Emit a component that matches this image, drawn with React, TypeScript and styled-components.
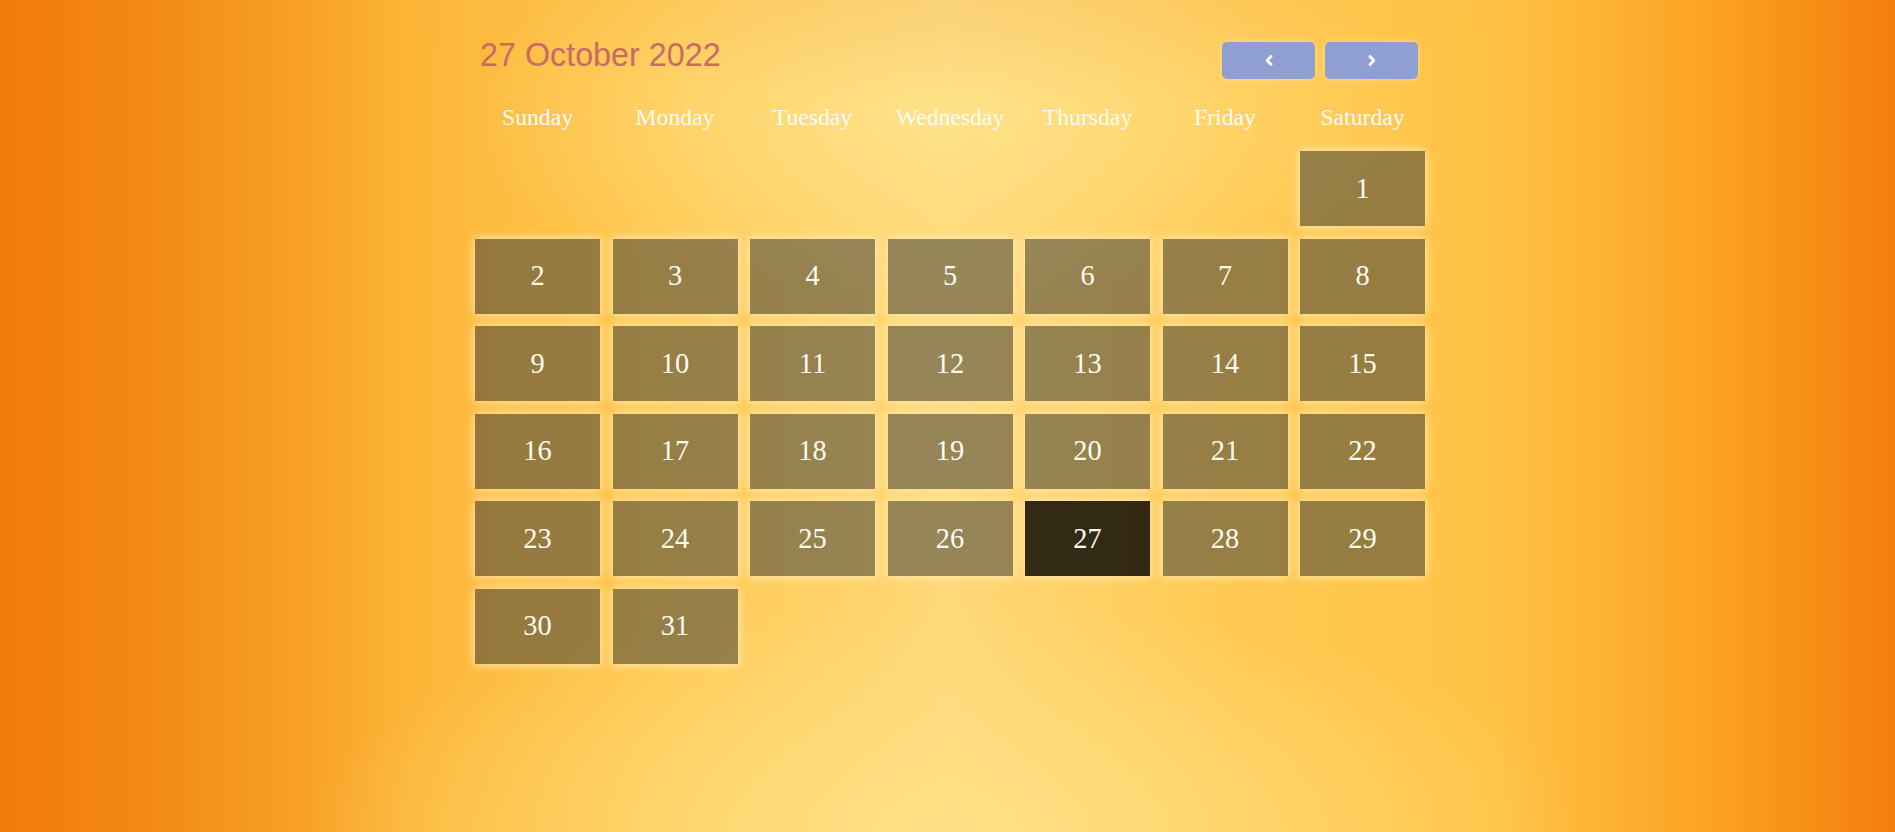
import React from "react";
import styled, { createGlobalStyle } from "styled-components";

const GlobalStyle = createGlobalStyle`
  html, body {
    margin: 0;
    padding: 0;
    height: 100%;
  }
  body {
    font-family: "Liberation Serif", "Times New Roman", serif;
    overflow: hidden;
  }
`;

const Page = styled.div`
  min-height: 100vh;
  box-sizing: border-box;
  display: flex;
  justify-content: center;
  padding-left: 5px;
  background:
    radial-gradient(ellipse 30% 12% at 50% 0%, rgba(236, 175, 90, 0.22), transparent 100%),
    radial-gradient(ellipse 26% 22% at 50% 14%, rgba(255, 230, 145, 0.7), transparent 100%),
    radial-gradient(ellipse 34% 28% at 50% 100%, rgba(255, 226, 135, 0.85), transparent 100%),
    linear-gradient(
      to right,
      #f27a0c 0%,
      #f38a17 8%,
      #f79e24 15%,
      #fcb638 22%,
      #ffc952 35%,
      #ffd878 50%,
      #ffc952 65%,
      #ffc244 79%,
      #fca324 90%,
      #f47e0c 100%
    );
`;

const Calendar = styled.div`
  width: 950px;
  padding-top: 37px;
`;

const Header = styled.div`
  display: flex;
  justify-content: space-between;
  align-items: flex-start;
  padding: 0 7px 0 5px;
`;

const Title = styled.h1`
  margin: 0;
  font-family: "Liberation Sans", Arial, sans-serif;
  font-weight: 400;
  font-size: 32.3px;
  line-height: normal;
  color: #c96a63;
`;

const NavGroup = styled.div`
  display: flex;
  gap: 10px;
  margin-top: 5px;
`;

const NavButton = styled.button`
  width: 93px;
  height: 37px;
  border: none;
  border-radius: 5px;
  background: #8f9fd3;
  box-shadow: 0 0 6px rgba(255, 238, 190, 0.55);
  display: flex;
  align-items: center;
  justify-content: center;
  padding: 0;
  cursor: pointer;
`;

const WeekRow = styled.div`
  display: grid;
  grid-template-columns: repeat(7, 125px);
  column-gap: 12.5px;
  margin-top: 25px;
`;

const WeekDay = styled.div`
  text-align: center;
  font-size: 23.7px;
  line-height: normal;
  color: #fffcf2;
`;

const DaysGrid = styled.div`
  display: grid;
  grid-template-columns: repeat(7, 125px);
  grid-auto-rows: 75px;
  gap: 12.5px;
  margin-top: 20px;
`;

const DayCell = styled.div<{ $start?: number; $today?: boolean }>`
  grid-column-start: ${(p) => (p.$start ? p.$start : "auto")};
  display: flex;
  align-items: center;
  justify-content: center;
  font-size: 28.4px;
  color: #fffcf2;
  background: ${(p) => (p.$today ? "rgba(0, 0, 0, 0.8)" : "rgba(45, 52, 55, 0.5)")};
  box-shadow: 0 0 9px 1px rgba(255, 240, 190, 0.9);
`;

const Chevron: React.FC<{ dir: "left" | "right" }> = ({ dir }) => (
  <svg width="8" height="11" viewBox="0 0 8 11" aria-hidden="true">
    <path
      d={dir === "left" ? "M6 1.5 L2.2 5.5 L6 9.5" : "M2 1.5 L5.8 5.5 L2 9.5"}
      fill="none"
      stroke="#ffffff"
      strokeWidth="2.8"
      strokeLinecap="round"
      strokeLinejoin="round"
    />
  </svg>
);

const weekDays = ["Sunday", "Monday", "Tuesday", "Wednesday", "Thursday", "Friday", "Saturday"];

export default function App() {
  const year = 2022;
  const month = 9; // October
  const today = 27;
  const firstDay = new Date(year, month, 1).getDay();
  const daysInMonth = new Date(year, month + 1, 0).getDate();
  const days = Array.from({ length: daysInMonth }, (_, i) => i + 1);

  return (
    <>
      <GlobalStyle />
      <Page>
        <Calendar>
          <Header>
            <Title>27 October 2022</Title>
            <NavGroup>
              <NavButton aria-label="Previous month">
                <Chevron dir="left" />
              </NavButton>
              <NavButton aria-label="Next month">
                <Chevron dir="right" />
              </NavButton>
            </NavGroup>
          </Header>
          <WeekRow>
            {weekDays.map((d) => (
              <WeekDay key={d}>{d}</WeekDay>
            ))}
          </WeekRow>
          <DaysGrid>
            {days.map((d) => (
              <DayCell
                key={d}
                $start={d === 1 ? firstDay + 1 : undefined}
                $today={d === today}
              >
                {d}
              </DayCell>
            ))}
          </DaysGrid>
        </Calendar>
      </Page>
    </>
  );
}
